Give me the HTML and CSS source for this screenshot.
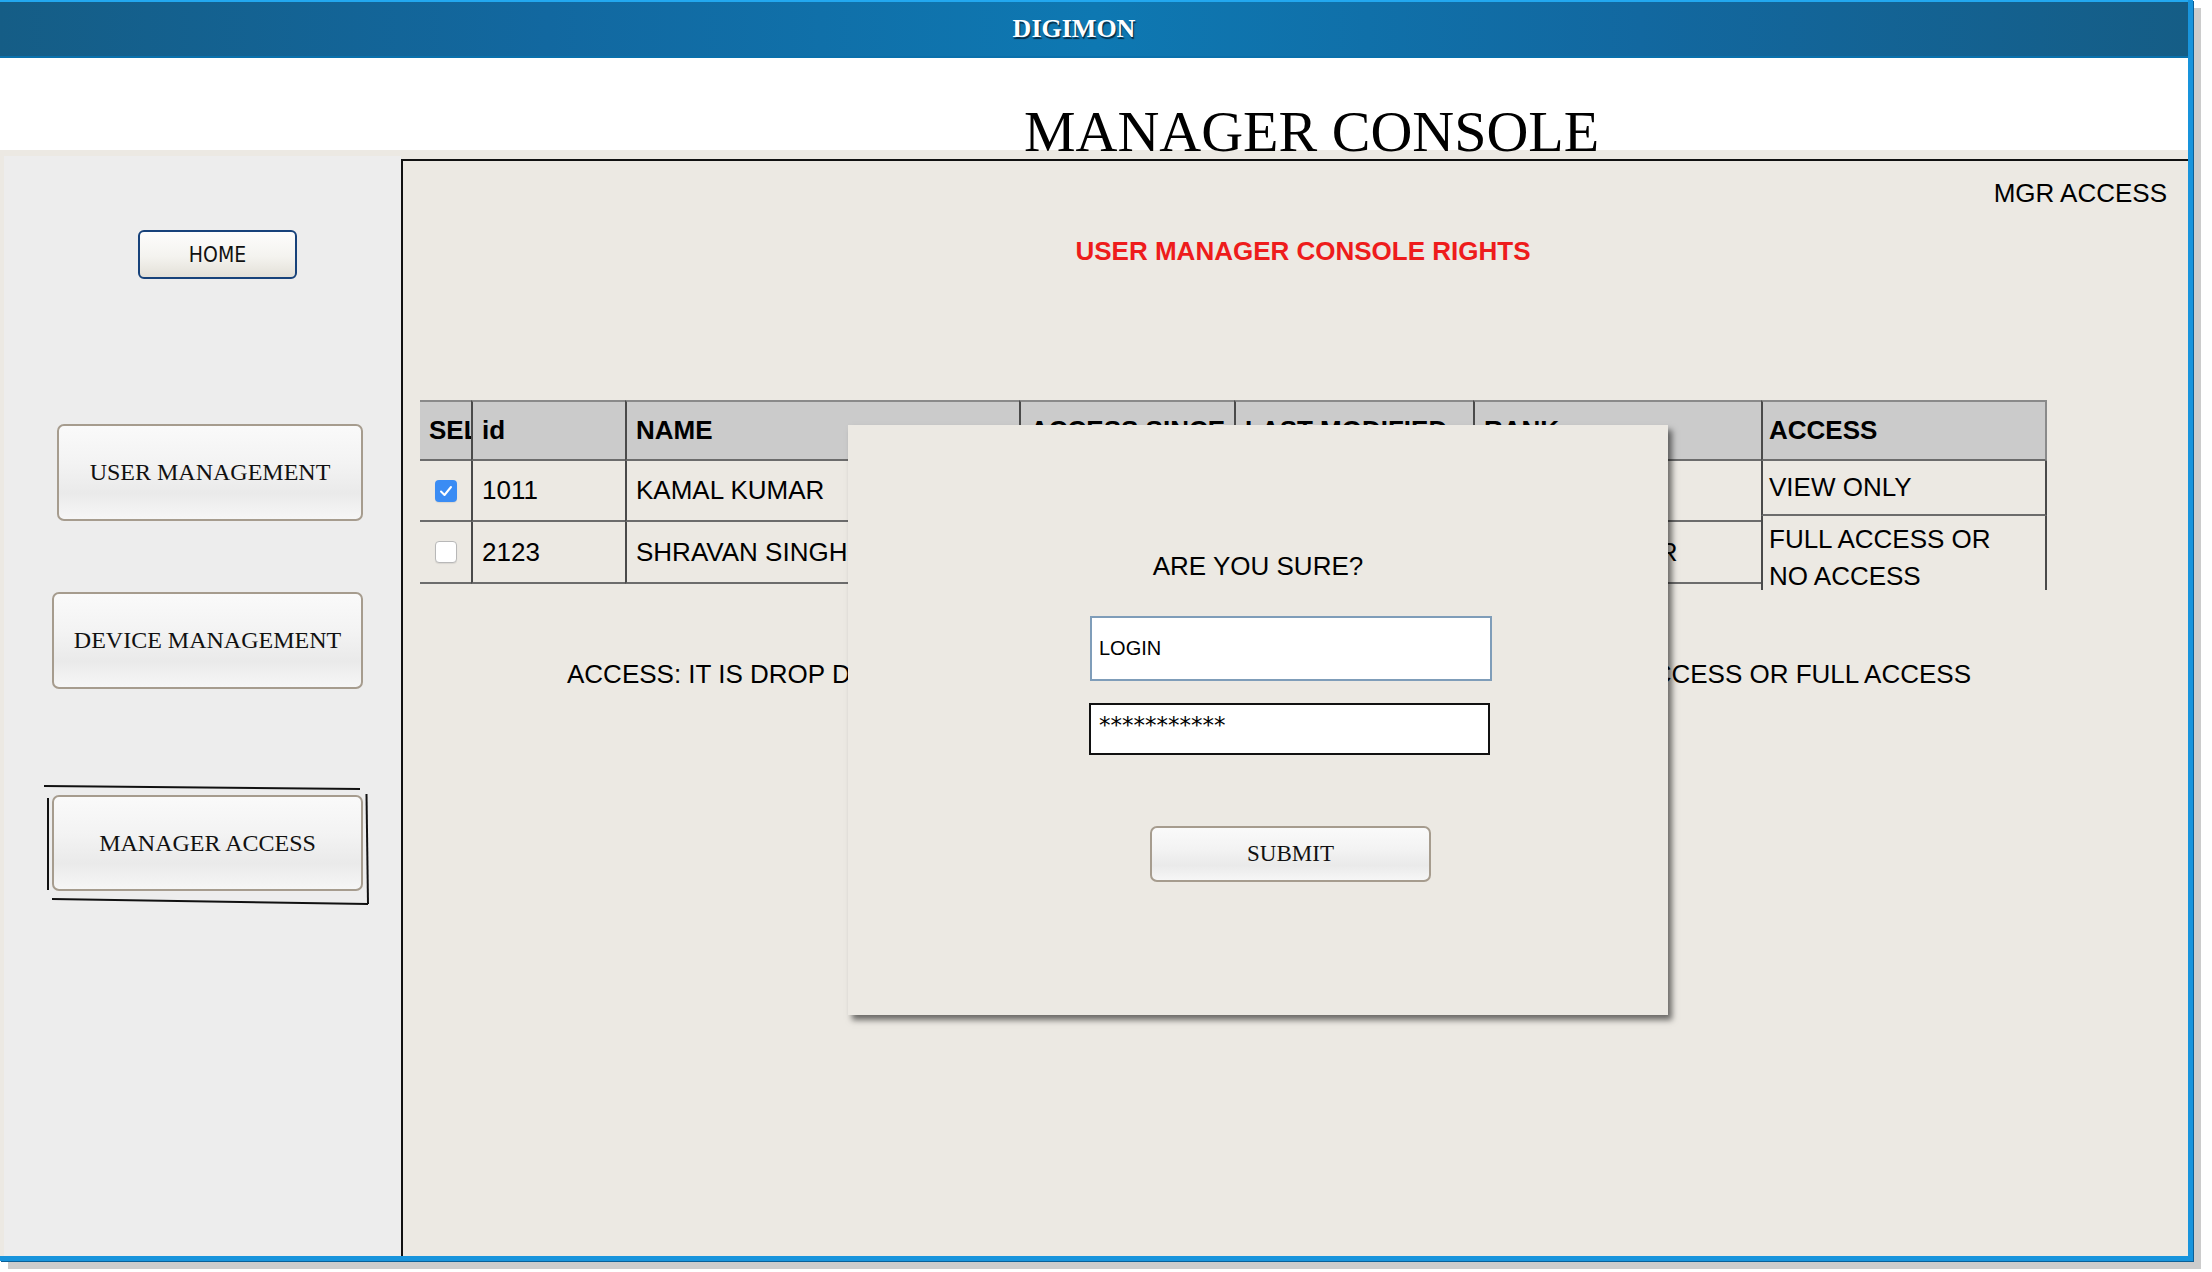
FILE: index.html
```html
<!DOCTYPE html>
<html lang="en">
<head>
<meta charset="utf-8">
<title>DIGIMON - Manager Console</title>
<link rel="stylesheet" href="styles.css">
</head>
<body>
<div class="window">
  <header class="topbar"><span class="brand">DIGIMON</span></header>
  <div class="titleband"><h1 class="title">MANAGER CONSOLE</h1></div>
  <div class="body">
    <nav class="sidebar">
      <div class="btn btn-home">HOME</div>
      <div class="btn btn-nav btn-user">USER MANAGEMENT</div>
      <div class="btn btn-nav btn-device">DEVICE MANAGEMENT</div>
      <div class="selected">
        <div class="btn btn-nav btn-mgr">MANAGER ACCESS</div>
        <svg class="sketch" width="335" height="130" viewBox="0 0 335 130">
          <path d="M4 3 L320 6" />
          <path d="M8 15 L8 107" />
          <path d="M12 116 L328 121" />
          <path d="M326.5 11 L328 121" />
        </svg>
      </div>
    </nav>
    <main class="main">
      <div class="mgr">MGR ACCESS</div>
      <div class="rights">USER MANAGER CONSOLE RIGHTS</div>
      <div class="tables">
        <div class="grid">
          <div class="cell head c-sel">SEL</div>
          <div class="cell head">id</div>
          <div class="cell head">NAME</div>
          <div class="cell head">ACCESS SINCE</div>
          <div class="cell head">LAST MODIFIED</div>
          <div class="cell head">RANK</div>

          <div class="cell c-sel c-box"><span class="check on"><svg width="22" height="22" viewBox="0 0 22 22"><path d="M6 11.5 L9.5 15 L16 7" /></svg></span></div>
          <div class="cell">1011</div>
          <div class="cell">KAMAL KUMAR</div>
          <div class="cell">12-03-2015</div>
          <div class="cell">20-08-2016</div>
          <div class="cell">MANAGER</div>

          <div class="cell c-sel c-box"><span class="check"></span></div>
          <div class="cell">2123</div>
          <div class="cell">SHRAVAN SINGH</div>
          <div class="cell">05-06-2014</div>
          <div class="cell">11-02-2016</div>
          <div class="cell">AST. MANAGER</div>
        </div>
        <div class="accesscol">
          <div class="acell head">ACCESS</div>
          <div class="acell a-row1">VIEW ONLY</div>
          <div class="acell a-row2">FULL ACCESS OR<br>NO ACCESS</div>
        </div>
      </div>
      <div class="note"><span>ACCESS: IT IS DROP DOWN WITH OPTIONS VIEW ONLY,</span><span>NO ACCESS OR FULL ACCESS</span></div>
    </main>
  </div>

  <div class="modal">
    <div class="sure">ARE YOU SURE?</div>
    <div class="field login">LOGIN</div>
    <div class="field pass">***********</div>
    <div class="btn submit">SUBMIT</div>
  </div>
</div>
</body>
</html>
```

FILE: styles.css
```css
* { box-sizing: border-box; }

html, body {
  margin: 0;
  padding: 0;
  background: #ffffff;
}

body {
  width: 2212px;
  height: 1272px;
  overflow: hidden;
  font-family: "Liberation Sans", Arial, sans-serif;
  color: #111;
}

.window {
  position: relative;
  width: 2193px;
  height: 1261px;
  background: #ece9e3;
  border-right: 5px solid #1894dc;
  border-bottom: 5px solid #1894dc;
  box-shadow: 1px 1px 0 #0b5f96, 8px 8px 0 #cccccc;
}

/* top bar */
.topbar {
  height: 58px;
  border-top: 2px solid #22a8f0;
  border-bottom: 2px solid #0a70ab;
  background: linear-gradient(to right, #155d86 0%, #1268a0 25%, #0e78b2 50%, #1268a0 75%, #155d86 100%);
  display: flex;
  align-items: center;
  justify-content: center;
  padding-right: 40px;
}

.brand {
  font-family: "Liberation Serif", "Times New Roman", serif;
  font-weight: bold;
  font-size: 26px;
  color: #ffffff;
  text-shadow: 1px 2px 1px #082a40;
}

/* title band */
.titleband {
  height: 92px;
  background: #ffffff;
  overflow: visible;
}

.title {
  margin: 0;
  padding: 45px 0 0 1024px;
  font-family: "Liberation Serif", "Times New Roman", serif;
  font-weight: normal;
  font-size: 58px;
  line-height: 58px;
  color: #000;
  white-space: nowrap;
}

/* body */
.body {
  height: 1106px;
  display: flex;
  padding: 6px 0 0 4px;
  background: #ece9e3;
}

.sidebar {
  width: 397px;
  flex: none;
  background: #ededed;
  display: flex;
  flex-direction: column;
  align-items: flex-start;
}

.btn {
  display: flex;
  align-items: center;
  justify-content: center;
  border: 2px solid #a69c8e;
  border-radius: 7px;
  background: linear-gradient(to bottom, #fafafa 0%, #f3f3f3 40%, #eaeaea 72%, #f6f6f6 100%);
  font-family: "Liberation Serif", "Times New Roman", serif;
  font-size: 24px;
  color: #111;
  white-space: nowrap;
}

.btn-home {
  margin: 74px 0 0 134px;
  width: 159px;
  height: 49px;
  border-color: #17427a;
  border-radius: 6px;
  background: linear-gradient(to bottom, #fdfdfc 0%, #f4f3ef 55%, #e3e0d8 100%);
  font-family: "DejaVu Sans Condensed", "DejaVu Sans", sans-serif;
  font-size: 21px;
}

.btn-nav {
  width: 311px;
  height: 97px;
}

.btn-user {
  margin: 145px 0 0 53px;
  width: 306px;
}

.btn-device {
  margin: 71px 0 0 48px;
}

.selected {
  position: relative;
  margin: 106px 0 0 48px;
}

.btn-mgr {
  height: 96px;
}

.sketch {
  position: absolute;
  left: -12px;
  top: -12px;
  overflow: visible;
}

.sketch path {
  fill: none;
  stroke: #111;
  stroke-width: 2;
}

/* main */
.main {
  flex: 1;
  margin-top: 3px;
  border-top: 2px solid #111;
  border-left: 2px solid #111;
  padding: 0 21px 0 17px;
  font-size: 26px;
}

.mgr {
  margin-top: 17px;
  text-align: right;
  line-height: 30px;
  font-size: 26px;
  color: #000;
}

.rights {
  margin-top: 28px;
  padding-left: 19px;
  text-align: center;
  line-height: 30px;
  font-size: 26px;
  font-weight: bold;
  color: #ee1c1c;
}

.tables {
  margin-top: 134px;
  display: flex;
  align-items: flex-start;
}

.grid {
  display: grid;
  grid-template-columns: 51px 154px 394px 215px 239px 288px;
  grid-template-rows: 61px 61px 62px;
}

.cell {
  display: flex;
  align-items: center;
  padding-left: 9px;
  border-left: 2px solid #4a4a4a;
  border-bottom: 2px solid #6c6c6c;
  overflow: hidden;
  white-space: nowrap;
  font-size: 26px;
  color: #000;
}

.cell.head {
  background: #cbcbcb;
  border-top: 2px solid #8a8a8a;
  font-weight: bold;
}

.c-sel {
  border-left: none;
  padding-left: 9px;
}

.c-box {
  padding-left: 0;
  justify-content: center;
}

.check {
  display: block;
  width: 22px;
  height: 22px;
  border-radius: 4px;
  background: #ffffff;
  border: 1px solid #b8b8b8;
  box-shadow: 0 1px 1px rgba(0,0,0,0.08);
}

.check.on {
  background: #3a8cf4;
  border: none;
}

.check svg {
  display: block;
}

.check path {
  fill: none;
  stroke: #ffffff;
  stroke-width: 2;
  stroke-linecap: round;
  stroke-linejoin: round;
}

.accesscol {
  width: 286px;
  flex: none;
  display: flex;
  flex-direction: column;
}

.acell {
  border-left: 2px solid #4a4a4a;
  border-right: 2px solid #4a4a4a;
  padding-left: 6px;
  font-size: 26px;
  color: #000;
}

.acell.head {
  height: 61px;
  display: flex;
  align-items: center;
  background: #cbcbcb;
  border-top: 2px solid #8a8a8a;
  border-bottom: 2px solid #6c6c6c;
  border-right-color: #8a8a8a;
  font-weight: bold;
}

.a-row1 {
  height: 55px;
  display: flex;
  align-items: center;
  border-bottom: 2px solid #6c6c6c;
}

.a-row2 {
  height: 74px;
  padding-top: 5px;
  line-height: 37px;
  overflow: visible;
  white-space: nowrap;
}

.note {
  margin: 69px 0 0 147px;
  width: 1404px;
  display: flex;
  justify-content: space-between;
  line-height: 30px;
  font-size: 26px;
  white-space: nowrap;
  color: #000;
}

/* modal */
.modal {
  position: absolute;
  left: 848px;
  top: 425px;
  width: 820px;
  height: 590px;
  background: #ece9e3;
  box-shadow: 4px 5px 6px rgba(0,0,0,0.55);
  display: flex;
  flex-direction: column;
  align-items: flex-start;
}

.sure {
  align-self: stretch;
  margin-top: 126px;
  text-align: center;
  line-height: 30px;
  font-size: 26px;
  color: #000;
}

.field {
  background: #ffffff;
}

.login {
  margin: 35px 0 0 242px;
  width: 402px;
  height: 65px;
  border: 2px solid #7f9db9;
  display: flex;
  align-items: center;
  padding-left: 7px;
  font-size: 20px;
  color: #000;
}

.pass {
  margin: 22px 0 0 241px;
  width: 401px;
  height: 52px;
  border: 2px solid #111;
  padding: 9px 0 0 8px;
  font-family: "DejaVu Sans", sans-serif;
  font-size: 23px;
  line-height: 23px;
  color: #000;
}

.submit {
  margin: 71px 0 0 302px;
  width: 281px;
  height: 56px;
  font-size: 23px;
}
```
